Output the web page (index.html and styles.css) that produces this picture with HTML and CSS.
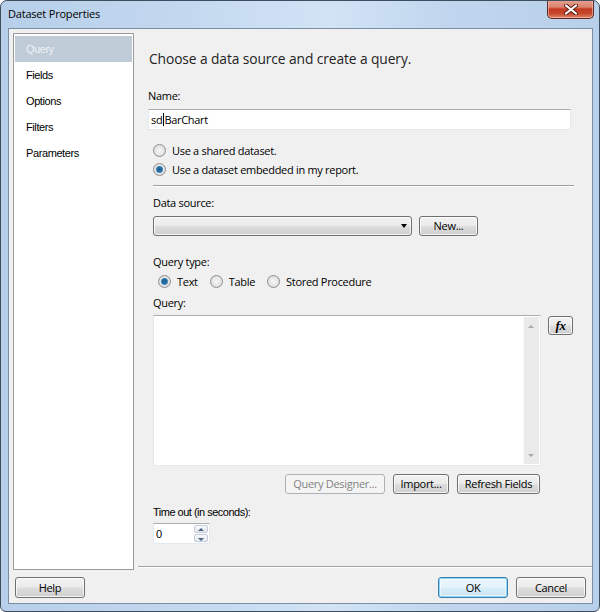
FILE: index.html
```html
<!DOCTYPE html>
<html>
<head>
<meta charset="utf-8">
<title>Dataset Properties</title>
<link rel="stylesheet" href="styles.css">
</head>
<body>
<div class="window">
  <div class="titlebar">
    <span class="title">Dataset Properties</span>
    <div class="close">
      <svg width="14" height="11" viewBox="0 0 14 11"><path d="M2 1.5 L12 9.5 M12 1.5 L2 9.5" stroke="#5a1f14" stroke-width="4" stroke-linecap="round"/><path d="M2 1.5 L12 9.5 M12 1.5 L2 9.5" stroke="#ffffff" stroke-width="2.2" stroke-linecap="round"/></svg>
    </div>
  </div>
  <div class="client">
    <div class="body">
      <nav class="nav">
        <div class="nav-item selected">Query</div>
        <div class="nav-item">Fields</div>
        <div class="nav-item">Options</div>
        <div class="nav-item">Filters</div>
        <div class="nav-item">Parameters</div>
      </nav>
      <main class="main">
        <div class="heading">Choose a data source and create a query.</div>
        <div class="label name-label">Name:</div>
        <div class="textbox name-box">sd<span class="caret"></span>BarChart</div>
        <div class="radio-row first"><span class="radio"></span>Use a shared dataset.</div>
        <div class="radio-row"><span class="radio checked"></span>Use a dataset embedded in my report.</div>
        <div class="sep"></div>
        <div class="label ds-label">Data source:</div>
        <div class="ds-row">
          <div class="combo"><span class="combo-arrow"></span></div>
          <div class="btn new-btn">New...</div>
        </div>
        <div class="label qt-label">Query type:</div>
        <div class="qt-row">
          <span class="qt-opt"><span class="radio checked"></span>Text</span>
          <span class="qt-opt"><span class="radio"></span>Table</span>
          <span class="qt-opt"><span class="radio"></span>Stored Procedure</span>
        </div>
        <div class="label q-label">Query:</div>
        <div class="q-row">
          <div class="textarea">
            <div class="vscroll">
              <span class="sarrow up"></span>
              <span class="sarrow down"></span>
            </div>
          </div>
          <div class="btn fx-btn"><span class="fx">fx</span></div>
        </div>
        <div class="qbtn-row">
          <div class="btn disabled qd-btn">Query Designer...</div>
          <div class="btn import-btn">Import...</div>
          <div class="btn refresh-btn">Refresh Fields</div>
        </div>
        <div class="label classic to-label">Time out (in seconds):</div>
        <div class="spinner">
          <span class="spin-val">0</span>
          <div class="spin-btns">
            <span class="spin-btn"><span class="tri up"></span></span>
            <span class="spin-btn"><span class="tri down"></span></span>
          </div>
        </div>
        <div class="bottom-sep"></div>
      </main>
    </div>
    <div class="footer">
      <div class="btn help-btn">Help</div>
      <div class="footer-right">
        <div class="btn default ok-btn">OK</div>
        <div class="btn cancel-btn">Cancel</div>
      </div>
    </div>
  </div>
</div>
</body>
</html>
```

FILE: styles.css
```css
* { box-sizing: border-box; }
html, body { margin: 0; padding: 0; }
body {
  width: 600px;
  height: 612px;
  overflow: hidden;
  background: #ffffff;
  font-family: "Open Sans", "Noto Sans", sans-serif;
  font-size: 11px;
  letter-spacing: -0.3px;
  color: #000;
}
.window {
  width: 600px;
  height: 612px;
  border: 1px solid #3f4e5e;
  border-radius: 7px 7px 6px 6px;
  background: linear-gradient(90deg, #b7cfea 0%, #c3d8ef 30%, #d2e3f5 55%, #c0d6ee 75%, #b9d0ea 100%);
  display: flex;
  flex-direction: column;
  overflow: hidden;
}
.titlebar {
  height: 27px;
  flex: none;
  position: relative;
  display: flex;
  align-items: flex-start;
}
.title {
  margin: 6px 0 0 7px;
  font-size: 11px;
  letter-spacing: -0.2px;
  line-height: 14px;
  color: #000;
}
.close {
  position: absolute;
  right: 5px;
  top: -1px;
  width: 47px;
  height: 19px;
  border: 1px solid #5b2a22;
  border-top: none;
  border-radius: 0 0 5px 5px;
  background: linear-gradient(180deg, #e8a493 0%, #d9806b 40%, #c23a20 50%, #c7472c 75%, #e0876b 100%);
  box-shadow: inset 0 0 0 1px rgba(255,210,200,0.55);
  display: flex;
  align-items: center;
  justify-content: center;
}
.client {
  flex: 1;
  margin: 0 6px 7px 7px;
  border: 1px solid #7b8ea4;
  background: #f0f0f0;
  display: flex;
  flex-direction: column;
}
.body {
  height: 541px;
  display: flex;
}
.nav {
  margin: 4px 0 0 4px;
  width: 121px;
  height: 537px;
  flex: none;
  border: 1px solid #9a9a9a;
  background: #ffffff;
  padding: 2px 1px 1px 1px;
  font-family: "Liberation Sans", Arial, sans-serif;
  font-size: 11px;
  letter-spacing: -0.4px;
}
.nav-item {
  height: 26px;
  line-height: 26px;
  padding-left: 11px;
  color: #000;
}
.nav-item.selected {
  background: #bfcbd7;
  color: #eef2f6;
}
.main {
  flex: 1;
  display: flex;
  flex-direction: column;
  align-items: flex-start;
  padding: 20px 0 0 14px;
}
.heading {
  font-size: 13.8px;
  letter-spacing: -0.1px;
  line-height: 20px;
  margin-left: 1px;
  color: #1e1e1e;
}
.label {
  line-height: 16px;
  margin-left: 5px;
}
.name-label { margin-top: 19px; margin-left: 0; }
.textbox {
  background: #fff;
  border: 1px solid #e3e9ef;
  border-top-color: #abadb3;
}
.name-box {
  margin-top: 5px;
  width: 423px;
  height: 21px;
  line-height: 19px;
  padding-left: 2px;
}
.caret {
  display: inline-block;
  width: 1px;
  height: 13px;
  background: #000;
  vertical-align: -2px;
  margin: 0 0 0 1px;
}
.radio-row {
  display: flex;
  align-items: center;
  height: 19px;
  margin-left: 5px;
}
.radio-row.first { margin-top: 11px; }
.radio {
  position: relative;
  display: inline-block;
  width: 13px;
  height: 13px;
  flex: none;
  border-radius: 50%;
  border: 1px solid #8f8f8f;
  background: radial-gradient(circle at 50% 50%, #f6f6f6 0%, #e9e9e9 45%, #d2d2d2 100%);
  margin-right: 5px;
}
.radio.checked::after {
  content: "";
  position: absolute;
  left: 2px;
  top: 2px;
  width: 7px;
  height: 7px;
  border-radius: 50%;
  background: radial-gradient(circle at 50% 45%, #1f5d8e 0%, #2a6fa3 45%, #6eb2e0 100%);
}
.radio-row .radio { margin-right: 6px; }
.sep {
  margin: 6px 0 0 5px;
  width: 421px;
  border-top: 1px solid #a0a0a0;
  border-bottom: 1px solid #ffffff;
}
.ds-label { margin-top: 8px; }
.ds-row {
  display: flex;
  gap: 7px;
  margin: 5px 0 0 5px;
}
.btn {
  height: 20px;
  border: 1px solid #707070;
  border-radius: 3px;
  background: linear-gradient(180deg, #f2f2f2 0%, #ebebeb 48%, #dddddd 52%, #cfcfcf 100%);
  box-shadow: inset 0 0 0 1px rgba(255,255,255,0.75);
  display: flex;
  align-items: center;
  justify-content: center;
  line-height: 16px;
  color: #000;
}
.btn.disabled {
  border-color: #adb2b5;
  background: #f4f4f4;
  color: #838383;
  box-shadow: none;
}
.btn.default {
  border-color: #3c7fb1;
  box-shadow: inset 0 0 0 1px #8ed4f5, inset 0 0 0 2px rgba(255,255,255,0.5);
  background: linear-gradient(180deg, #eaf6fd 0%, #e5f2fa 48%, #d6ecf8 52%, #cde6f5 100%);
}
.combo {
  position: relative;
  width: 259px;
  height: 20px;
  border: 1px solid #707070;
  border-radius: 3px;
  background: linear-gradient(180deg, #f2f2f2 0%, #ebebeb 48%, #dddddd 52%, #cfcfcf 100%);
  box-shadow: inset 0 0 0 1px rgba(255,255,255,0.75);
}
.combo-arrow {
  position: absolute;
  right: 4px;
  top: 7px;
  width: 0;
  height: 0;
  border-left: 3.5px solid transparent;
  border-right: 3.5px solid transparent;
  border-top: 4px solid #000;
}
.new-btn { width: 59px; }
.qt-label { margin-top: 18px; }
.qt-row {
  display: flex;
  align-items: center;
  height: 18px;
  margin: 2px 0 0 10px;
}
.qt-opt {
  display: inline-flex;
  align-items: center;
  margin-right: 12px;
}
.qt-opt .radio { margin-right: 6px; }
.q-label { margin-top: 5px; }
.q-row {
  display: flex;
  align-items: flex-start;
  gap: 7px;
  margin: 4px 0 0 5px;
}
.textarea {
  width: 388px;
  height: 151px;
  background: #fff;
  border: 1px solid #e3e9ef;
  border-top-color: #abadb3;
  display: flex;
  justify-content: flex-end;
  padding: 1px;
}
.vscroll {
  position: relative;
  width: 16px;
  height: 100%;
  background: #eaeaea;
  border-left: 1px solid #f8f8f8;
}
.sarrow {
  position: absolute;
  left: 4px;
  width: 0;
  height: 0;
  border-left: 3.5px solid transparent;
  border-right: 3.5px solid transparent;
}
.sarrow.up { top: 8px; border-bottom: 3.5px solid #a8a8a8; }
.sarrow.down { bottom: 7px; border-top: 3.5px solid #a8a8a8; }
.fx-btn {
  width: 25px;
  height: 19px;
  margin-top: 1px;
}
.fx {
  font-family: "Liberation Serif", "Times New Roman", serif;
  font-style: italic;
  font-weight: bold;
  font-size: 13px;
  letter-spacing: -0.5px;
  line-height: 14px;
}
.qbtn-row {
  display: flex;
  justify-content: flex-end;
  gap: 8px;
  width: 387px;
  margin: 8px 0 0 5px;
}
.qd-btn { width: 100px; }
.import-btn { width: 56px; }
.refresh-btn { width: 83px; }
.classic {
  font-family: "Liberation Sans", Arial, sans-serif;
  letter-spacing: -0.5px;
}
.to-label { margin-top: 10px; }
.spinner {
  margin: 3px 0 0 5px;
  width: 57px;
  height: 21px;
  background: #fff;
  border: 1px solid #e3e9ef;
  border-top-color: #abadb3;
  display: flex;
  align-items: center;
  justify-content: space-between;
  padding: 1px;
}
.spin-val {
  font-family: "Liberation Sans", Arial, sans-serif;
  padding-left: 1px;
  line-height: 16px;
}
.spin-btns {
  display: flex;
  flex-direction: column;
  width: 14px;
  height: 100%;
  gap: 1px;
}
.spin-btn {
  position: relative;
  flex: 1;
  border: 1px solid #c3cbd6;
  border-radius: 2px;
  background: linear-gradient(180deg, #f7f9fb 0%, #e6eaef 100%);
}
.tri {
  position: absolute;
  left: 3px;
  width: 0;
  height: 0;
  border-left: 3px solid transparent;
  border-right: 3px solid transparent;
}
.tri.up { top: 2px; border-bottom: 3px solid #4d6185; }
.tri.down { top: 3px; border-top: 3px solid #4d6185; }
.bottom-sep {
  margin: auto 0 2px -10px;
  align-self: stretch;
  border-top: 1px solid #a0a0a0;
  border-bottom: 1px solid #ffffff;
}
.footer {
  height: 33px;
  display: flex;
  justify-content: space-between;
  align-items: flex-start;
  padding: 7px 6px 0 6px;
}
.footer .btn { height: 21px; width: 70px; }
.footer-right { display: flex; gap: 8px; }
```
